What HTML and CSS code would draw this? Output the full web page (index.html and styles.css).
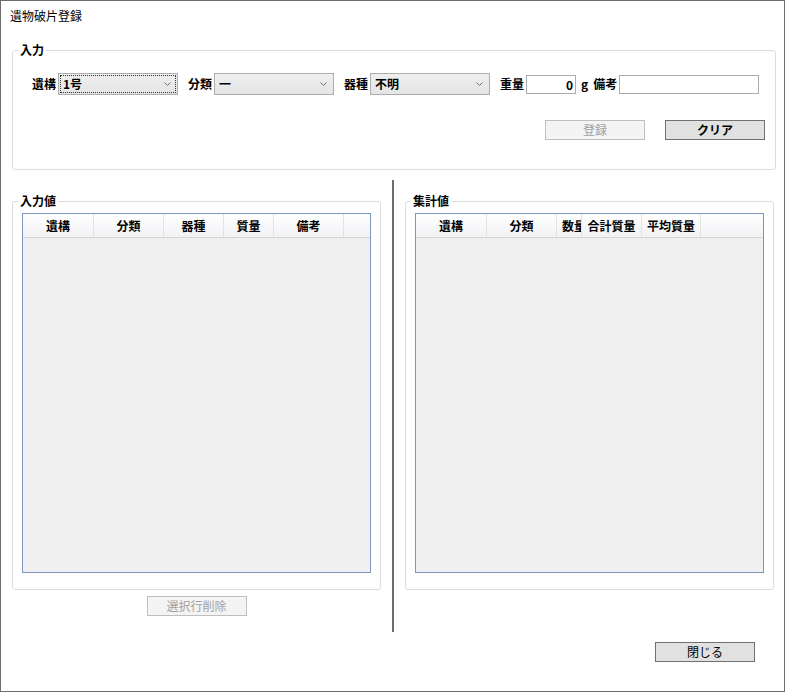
FILE: index.html
```html
<!DOCTYPE html>
<html lang="ja">
<head>
  <meta charset="UTF-8">
  <title>遺物破片登録</title>
  <link rel="stylesheet" href="styles.css">
</head>
<body>
  <div class="window">
    <div class="title">遺物破片登録</div>

    <fieldset class="group group-input">
      <legend>入力</legend>
      <div class="input-row">
        <label class="lbl">遺構</label>
        <div class="combo focused">
          <span>1号</span>
          <svg width="7" height="4" viewBox="0 0 7 4"><path d="M0.5 0.5 L3.5 3.5 L6.5 0.5" fill="none" stroke="#707070"/></svg>
        </div>
        <label class="lbl">分類</label>
        <div class="combo">
          <span>一</span>
          <svg width="7" height="4" viewBox="0 0 7 4"><path d="M0.5 0.5 L3.5 3.5 L6.5 0.5" fill="none" stroke="#707070"/></svg>
        </div>
        <label class="lbl">器種</label>
        <div class="combo">
          <span>不明</span>
          <svg width="7" height="4" viewBox="0 0 7 4"><path d="M0.5 0.5 L3.5 3.5 L6.5 0.5" fill="none" stroke="#707070"/></svg>
        </div>
        <label class="lbl">重量</label>
        <input class="text num" type="text" value="0">
        <span class="unit">g</span>
        <label class="lbl">備考</label>
        <input class="text note" type="text">
      </div>
      <div class="btn-row">
        <button class="btn" disabled>登録</button>
        <button class="btn btn-strong">クリア</button>
      </div>
    </fieldset>

    <div class="lower">
      <div class="pane">
        <fieldset class="group">
          <legend>入力値</legend>
          <div class="list">
            <div class="list-head">
              <span class="w71">遺構</span>
              <span class="w70">分類</span>
              <span class="w60">器種</span>
              <span class="w50">質量</span>
              <span class="w70">備考</span>
              <span class="fill"></span>
            </div>
            <div class="list-body"></div>
          </div>
        </fieldset>
        <button class="btn btn-delete" disabled>選択行削除</button>
      </div>

      <div class="divider"></div>

      <div class="pane">
        <fieldset class="group">
          <legend>集計値</legend>
          <div class="list">
            <div class="list-head">
              <span class="w71">遺構</span>
              <span class="w70">分類</span>
              <span class="w25 clip">数量</span>
              <span class="w60">合計質量</span>
              <span class="w59">平均質量</span>
              <span class="fill"></span>
            </div>
            <div class="list-body"></div>
          </div>
        </fieldset>
      </div>
    </div>

    <div class="footer">
      <button class="btn">閉じる</button>
    </div>
  </div>
</body>
</html>
```

FILE: styles.css
```css
* {
  box-sizing: border-box;
}

body {
  margin: 0;
  background: #fff;
  font-family: "Noto Sans CJK JP", "Noto Sans", sans-serif;
  font-size: 12px;
  color: #000;
}

.window {
  width: 785px;
  height: 692px;
  border: 1px solid #6d6d6d;
  background: #fff;
}

.title {
  margin: 7px 0 0 9px;
  height: 16px;
  line-height: 16px;
}

/* group boxes */
.group {
  margin: 0;
  padding: 0;
  min-width: 0;
  border: 1px solid #dcdcdc;
  border-radius: 3px;
}

.group legend {
  margin-left: 5px;
  padding: 0 2px;
  height: 16px;
  line-height: 16px;
  font-weight: bold;
}

.group-input {
  margin: 18px 8px 0 11px;
  padding: 15px 10px 29px 0;
}

.input-row {
  display: flex;
  align-items: center;
  height: 22px;
  margin-left: 19px;
}

.lbl {
  font-weight: bold;
  line-height: 16px;
  margin-right: 2px;
}

.combo {
  width: 120px;
  height: 22px;
  margin-right: 10px;
  padding: 0 6px 0 4px;
  display: flex;
  align-items: center;
  justify-content: space-between;
  border: 1px solid #adadad;
  background: linear-gradient(#efefef, #e5e5e5);
  font-weight: bold;
  line-height: 16px;
}

.combo.focused {
  outline: 1px dotted #333;
  outline-offset: -3px;
}

.text {
  height: 19px;
  margin: 0;
  padding: 0 2px;
  border: 1px solid #acacac;
  background: #fff;
  font-family: inherit;
  font-size: 12px;
  font-weight: bold;
  outline: none;
}

.num {
  width: 50px;
  text-align: right;
}

.note {
  width: 140px;
}

.unit {
  margin: 0 5px;
  font-weight: bold;
  line-height: 16px;
}

/* buttons */
.btn {
  width: 100px;
  height: 20px;
  padding: 0;
  border: 1px solid #707070;
  background: #e1e1e1;
  font-family: inherit;
  font-size: 12px;
  line-height: 16px;
  color: #000;
}

.btn:disabled {
  border-color: #bfbfbf;
  background: #f4f4f4;
  color: #a0a0a0;
}

.btn-strong {
  font-weight: bold;
}

.btn-row {
  display: flex;
  justify-content: flex-end;
  gap: 20px;
  margin-top: 25px;
}

/* lower panes */
.lower {
  display: flex;
  height: 452px;
  margin-top: 10px;
}

.pane {
  width: 369px;
  padding-top: 13px;
  display: flex;
  flex-direction: column;
  align-items: center;
}

.pane:first-child {
  margin-left: 11px;
}

.pane .group {
  width: 100%;
  padding: 4px 9px 16px;
}

.pane .group legend {
  margin-left: -4px;
}

.divider {
  width: 2px;
  background: #6d6d6d;
  margin: 0 11px;
}

.btn-delete {
  margin-top: 6px;
}

/* list views */
.list {
  height: 360px;
  border: 1px solid #7a98bd;
  background: #f0f0f0;
  display: flex;
  flex-direction: column;
}

.list-head {
  display: flex;
  height: 24px;
  border-bottom: 1px solid #d5d5d5;
  background: linear-gradient(#fff, #f1f2f4);
}

.list-head span {
  flex: none;
  border-right: 1px solid #e3e3e3;
  text-align: center;
  line-height: 23px;
  font-weight: bold;
  white-space: nowrap;
  overflow: hidden;
}

.list-head .fill {
  flex: 1;
  border-right: none;
}

.list-head .clip {
  text-align: left;
  padding-left: 5px;
  padding-right: 3px;
}

.w25 { width: 25px; }
.w50 { width: 50px; }
.w59 { width: 59px; }
.w60 { width: 60px; }
.w70 { width: 70px; }
.w71 { width: 71px; }

.list-body {
  flex: 1;
}

.footer {
  display: flex;
  justify-content: flex-end;
  margin-top: 10px;
  padding-right: 29px;
}
```
